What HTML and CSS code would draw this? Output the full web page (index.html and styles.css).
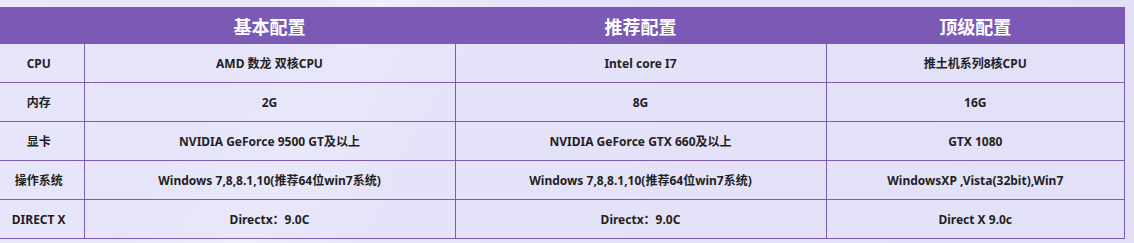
FILE: index.html
```html
<!DOCTYPE html>
<html lang="zh">
<head>
<meta charset="utf-8">
<title>配置要求</title>
<link rel="stylesheet" href="styles.css">
</head>
<body>
<div class="page">
  <table class="spec">
    <thead>
      <tr>
        <th class="label"></th>
        <th>基本配置</th>
        <th>推荐配置</th>
        <th>顶级配置</th>
      </tr>
    </thead>
    <tbody>
      <tr>
        <td class="label">CPU</td>
        <td>AMD 数龙 双核CPU</td>
        <td>Intel core I7</td>
        <td>推土机系列8核CPU</td>
      </tr>
      <tr>
        <td class="label">内存</td>
        <td>2G</td>
        <td>8G</td>
        <td>16G</td>
      </tr>
      <tr>
        <td class="label">显卡</td>
        <td>NVIDIA GeForce 9500 GT及以上</td>
        <td>NVIDIA GeForce GTX 660及以上</td>
        <td>GTX 1080</td>
      </tr>
      <tr>
        <td class="label">操作系统</td>
        <td>Windows 7,8,8.1,10(推荐64位win7系统)</td>
        <td>Windows 7,8,8.1,10(推荐64位win7系统)</td>
        <td>WindowsXP ,Vista(32bit),Win7</td>
      </tr>
      <tr>
        <td class="label">DIRECT X</td>
        <td>Directx：9.0C</td>
        <td>Directx：9.0C</td>
        <td>Direct X 9.0c</td>
      </tr>
    </tbody>
  </table>
</div>
</body>
</html>
```

FILE: styles.css
```css
html, body {
  margin: 0;
  padding: 0;
}

body {
  width: 1134px;
  height: 243px;
  overflow: hidden;
  background:
    linear-gradient(120deg, rgba(255,255,255,0) 20%, rgba(255,255,255,0.35) 30%, rgba(255,255,255,0) 40%),
    linear-gradient(100deg, #ebe9f8 0%, #e6e3f8 45%, #e2def7 100%);
  font-family: "Noto Sans", "Noto Sans CJK SC", sans-serif;
  color: #1f1f24;
}

.page {
  padding-top: 7px;
}

.spec {
  width: 1125px;
  border-collapse: collapse;
  table-layout: fixed;
}

.spec th {
  background: #7b5ab5;
  color: #ffffff;
  font-size: 18px;
  font-weight: 700;
  height: 37px;
  padding: 0;
  text-align: center;
  vertical-align: middle;
}

.spec th.label,
.spec td.label {
  width: 84px;
}

.spec th:nth-child(2),
.spec th:nth-child(3) {
  width: 371px;
}

.spec td {
  background: rgba(228, 226, 250, 0.55);
  font-size: 12px;
  font-weight: 700;
  height: 38px;
  padding: 0;
  text-align: center;
  vertical-align: middle;
  border-bottom: 1px solid #7d5db3;
  border-left: 1px solid #7d5db3;
}

.spec td.label {
  border-left: none;
  padding-right: 6px;
}

.spec td:last-child {
  border-right: 1px solid #7d5db3;
}
```
